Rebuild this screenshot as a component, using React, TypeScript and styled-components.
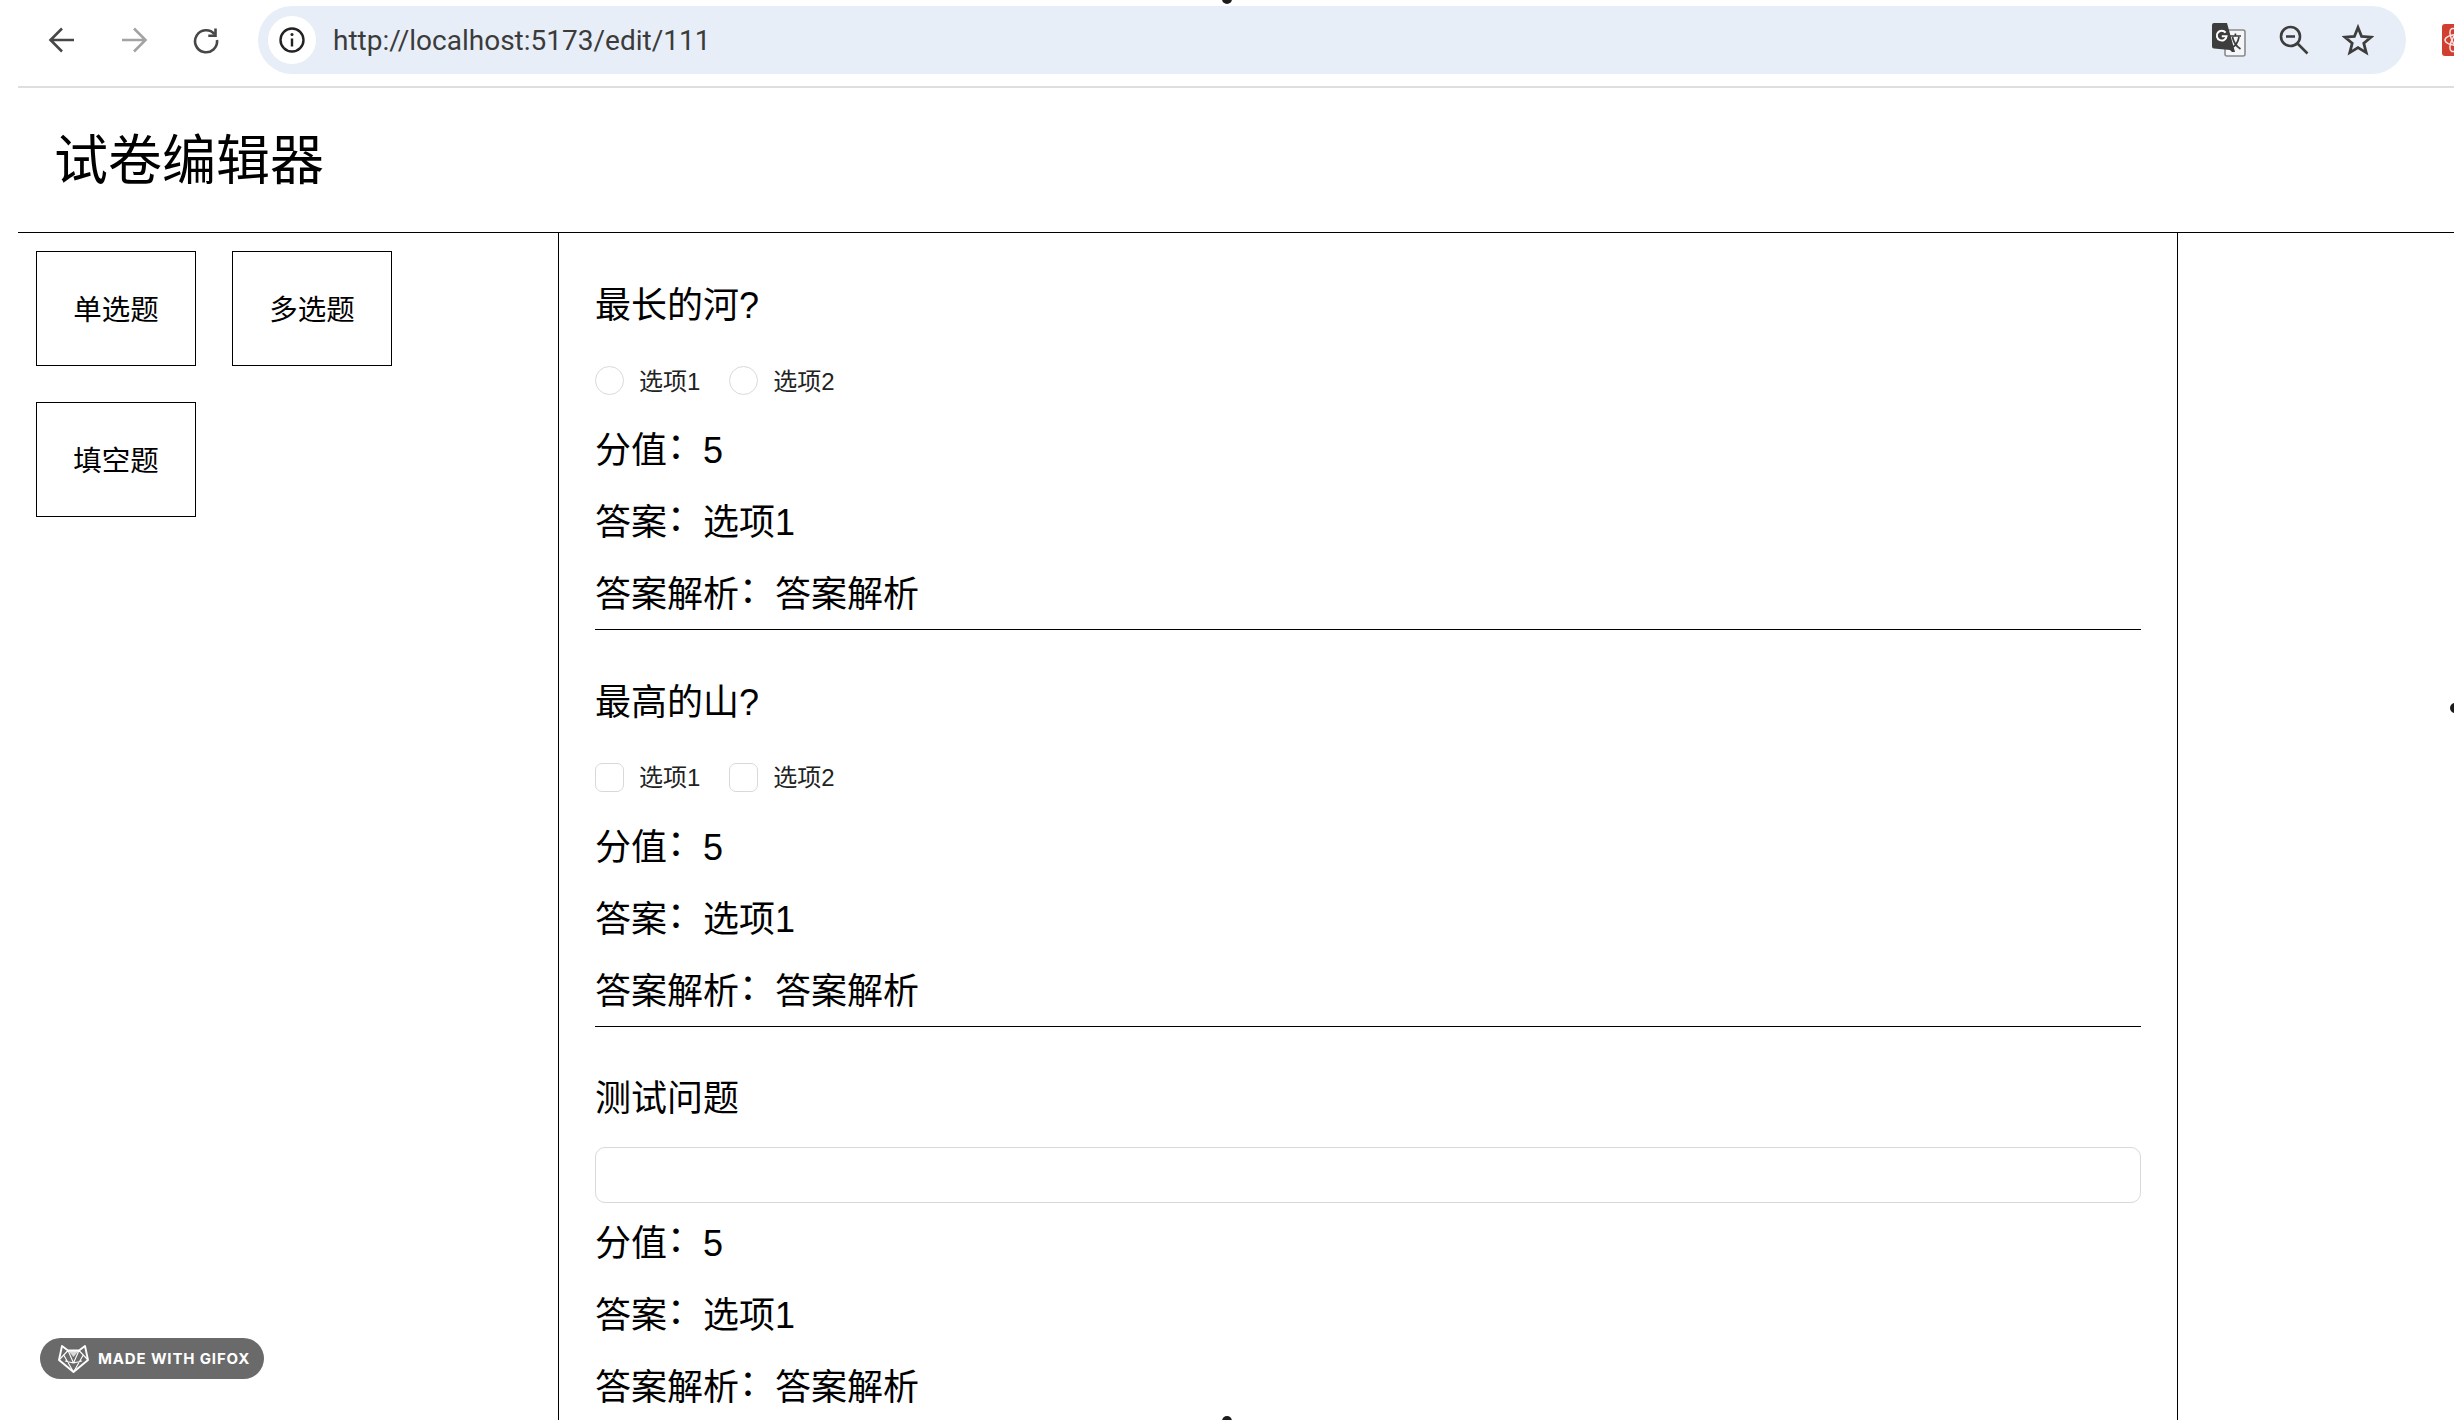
import React from "react";
import styled, { createGlobalStyle } from "styled-components";

const Global = createGlobalStyle`
  html, body { margin: 0; padding: 0; height: 100%; overflow: hidden; background: #fff; }
  body { font-family: "Liberation Sans", "Noto Sans CJK SC", sans-serif; color: #000; }
  * { box-sizing: border-box; }
`;

const Page = styled.div`
  position: relative;
  width: 2454px;
  height: 1420px;
  padding-left: 18px;
  overflow: hidden;
  background: #fff;
`;

const Toolbar = styled.div`
  display: flex;
  align-items: flex-start;
  height: 88px;
  padding: 6px 0 0 8px;
  border-bottom: 2px solid #dedede;
  overflow: hidden;
`;

const NavSlot = styled.div`
  flex: 0 0 72px;
  height: 68px;
  display: flex;
  align-items: center;
  justify-content: center;
`;

const UrlBar = styled.div`
  flex: 0 0 2148px;
  height: 68px;
  margin-left: 16px;
  padding: 0 32px 0 10px;
  display: flex;
  align-items: center;
  border-radius: 34px;
  background: #e8eef8;
`;

const InfoBadge = styled.div`
  flex: 0 0 48px;
  height: 48px;
  border-radius: 50%;
  background: #fff;
  display: flex;
  align-items: center;
  justify-content: center;
`;

const UrlText = styled.span`
  margin-left: 17px;
  font-family: "Roboto", "Liberation Sans", sans-serif;
  font-size: 28px;
  color: #3b3b3b;
  white-space: nowrap;
`;

const BarIcons = styled.div`
  margin-left: auto;
  display: flex;
  align-items: center;
  gap: 33px;
`;

const Extension = styled.div`
  flex: 0 0 32px;
  height: 32px;
  margin: 18px 0 0 36px;
  border-radius: 3px;
  background: #d13f30;
  display: flex;
  align-items: center;
  justify-content: center;
`;

const Header = styled.header`
  height: 145px;
  padding: 2px 0 0 36px;
  display: flex;
  align-items: center;
  border-bottom: 1px solid #000;
`;

const Title = styled.h1`
  margin: 0;
  font-size: 54px;
  font-weight: 400;
  line-height: 1;
`;

const Workspace = styled.div`
  display: flex;
  height: 1187px;
  overflow: hidden;
`;

const Palette = styled.aside`
  flex: 0 0 540px;
  padding: 18px;
  display: flex;
  flex-wrap: wrap;
  align-content: flex-start;
  gap: 36px;
`;

const PaletteItem = styled.div`
  width: 160px;
  height: 115px;
  padding-bottom: 3px;
  border: 1px solid #000;
  display: flex;
  align-items: center;
  justify-content: center;
  font-size: 28.5px;
`;

const Editor = styled.main`
  flex: 0 0 1620px;
  padding: 45px 36px 0;
  border-left: 1px solid #000;
  border-right: 1px solid #000;
`;

const Question = styled.section`
  margin-bottom: 44.6px;
  border-bottom: 1px solid #000;
  padding-bottom: 7px;
`;

const QuestionTitle = styled.div`
  padding-top: 1px;
  font-size: 36px;
  line-height: 54px;
`;

const AnswerArea = styled.div`
  height: 91px;
  padding: 20px 0 16px;
  display: flex;
  align-items: center;
  font-size: 24px;
`;

const Option = styled.label`
  display: flex;
  align-items: center;
  gap: 15px;
  margin-right: 29px;
  color: #222;
`;

const OptionText = styled.span`
  margin-bottom: 3px;
`;

const Control = styled.span<{ $round?: boolean }>`
  width: 29px;
  height: 29px;
  border: 1px solid #d9d9d9;
  border-radius: ${(p) => (p.$round ? "50%" : "7px")};
  background: #fff;
`;

const BlankInput = styled.div`
  flex: 0 0 auto;
  width: 100%;
  height: 56px;
  margin-top: 2px;
  border: 1px solid #d9d9d9;
  border-radius: 10px;
  background: #fff;
`;

const Row = styled.div`
  font-size: 36px;
  line-height: 54px;
  margin-bottom: 18px;
  &:last-child { margin-bottom: 0; }
`;

const Colon = styled.span`
  vertical-align: 4px;
  line-height: 0;
`;

const GifoxBadge = styled.div`
  position: absolute;
  left: 40px;
  top: 1338px;
  width: 224px;
  height: 41px;
  padding-left: 18px;
  border-radius: 21px;
  background: #6a6a6a;
  display: flex;
  align-items: center;
  gap: 9px;
  color: #fff;
  font-family: "Inter", "Liberation Sans", sans-serif;
  font-size: 15px;
  font-weight: 700;
  letter-spacing: 0.85px;
  white-space: nowrap;
`;

const Handle = styled.span<{ $x: number; $y: number }>`
  position: absolute;
  left: ${(p) => p.$x}px;
  top: ${(p) => p.$y}px;
  width: 10px;
  height: 10px;
  border-radius: 50%;
  background: #1c1c1c;
`;

const iconColor = "#474747";

const BackIcon = () => (
  <svg width="28" height="28" viewBox="0 0 28 28" fill="none" stroke={iconColor} strokeWidth="2.6">
    <path d="M26 14H3M14 2.5 2.5 14 14 25.5" />
  </svg>
);
const ForwardIcon = () => (
  <svg width="28" height="28" viewBox="0 0 28 28" fill="none" stroke="#a3a3a3" strokeWidth="2.6">
    <path d="M2 14h23M14 2.5 25.5 14 14 25.5" />
  </svg>
);
const ReloadIcon = () => (
  <svg width="28" height="28" viewBox="0 0 28 28" fill="none" stroke={iconColor} strokeWidth="2.6">
    <path d="M22.5 8.2A11 11 0 1 0 25 14" />
    <path d="M23.5 2.5v7.2h-7.2" />
  </svg>
);
const InfoIcon = () => (
  <svg width="28" height="28" viewBox="0 0 28 28" fill="none" stroke="#222" strokeWidth="2.4">
    <circle cx="14" cy="14" r="11.5" />
    <path d="M14 12.5v8" />
    <circle cx="14" cy="8.6" r="1.5" fill="#222" stroke="none" />
  </svg>
);
const TranslateIcon = () => (
  <svg width="34" height="34" viewBox="0 0 34 34" fill="none">
    <rect x="13" y="7" width="20" height="26" rx="2" fill="#f4f6fa" stroke="#8b8b8b" strokeWidth="1.6" />
    <path d="M2 0h13l8 29h-3l-2-2-16-1.5a2 2 0 0 1-2-2V2a2 2 0 0 1 2-2z" fill="#3d3d3d" />
    <path d="M13.6 9.6a4.9 4.9 0 1 0 1 3.6H9.8" stroke="#fff" strokeWidth="2" />
    <path d="M18 13h11M23.4 10.5v2.5M20.5 14c1 5 4 9.5 8 12M27 14c-1 5-3 8-6 10" stroke="#3d3d3d" strokeWidth="1.7" />
  </svg>
);
const ZoomOutIcon = () => (
  <svg width="30" height="30" viewBox="0 0 30 30" fill="none" stroke="#3d3d3d" strokeWidth="2.6">
    <circle cx="11.5" cy="11.5" r="9.5" />
    <path d="M7 11.5h9M18.5 18.5 28.5 28.5" />
  </svg>
);
const StarIcon = () => (
  <svg width="32" height="32" viewBox="0 0 32 32" fill="none" stroke="#3d3d3d" strokeWidth="2.8" strokeLinejoin="miter">
    <path d="M16 3.5 19.6 12.4 29.2 13.1 21.8 19.3 24.2 28.6 16 23.6 7.8 28.6 10.2 19.3 2.8 13.1 12.4 12.4Z" />
  </svg>
);
const AtomIcon = () => (
  <svg width="32" height="32" viewBox="0 0 32 32" fill="none" stroke="#fbe3df" strokeWidth="1.5">
    <ellipse cx="16" cy="16" rx="13" ry="5.5" />
    <ellipse cx="16" cy="16" rx="13" ry="5.5" transform="rotate(60 16 16)" />
    <ellipse cx="16" cy="16" rx="13" ry="5.5" transform="rotate(120 16 16)" />
  </svg>
);
const FoxIcon = () => (
  <svg width="31" height="28" viewBox="0 0 31 28" fill="none" stroke="#fff" strokeWidth="1.9" strokeLinejoin="round">
    <path d="M4 1 10 5.5H21L27 1 30 15 15.5 27 1 15Z" />
    <path d="M1 15 10 5.5 15.5 18 21 5.5 30 15M6 10.5 15.5 27 25 10.5M7 16l8.5 2 8.5-2" strokeWidth="1.1" />
    <path d="M10 5.5H21L15.5 12Z" fill="#fff" opacity="0.75" stroke="none" />
  </svg>
);

type Kind = "radio" | "checkbox" | "blank";

const questions: { title: string; kind: Kind }[] = [
  { title: "最长的河?", kind: "radio" },
  { title: "最高的山?", kind: "checkbox" },
  { title: "测试问题", kind: "blank" },
];

const Field = ({ label, value }: { label: string; value: string }) => (
  <Row>
    {label}
    <Colon>：</Colon>
    {value}
  </Row>
);

export default function App() {
  return (
    <Page>
      <Global />
      <Toolbar>
        <NavSlot><BackIcon /></NavSlot>
        <NavSlot><ForwardIcon /></NavSlot>
        <NavSlot><ReloadIcon /></NavSlot>
        <UrlBar>
          <InfoBadge><InfoIcon /></InfoBadge>
          <UrlText>http://localhost:5173/edit/111</UrlText>
          <BarIcons>
            <TranslateIcon />
            <ZoomOutIcon />
            <StarIcon />
          </BarIcons>
        </UrlBar>
        <Extension><AtomIcon /></Extension>
      </Toolbar>
      <Header>
        <Title>试卷编辑器</Title>
      </Header>
      <Workspace>
        <Palette>
          <PaletteItem>单选题</PaletteItem>
          <PaletteItem>多选题</PaletteItem>
          <PaletteItem>填空题</PaletteItem>
        </Palette>
        <Editor>
          {questions.map((q) => (
            <Question key={q.title}>
              <QuestionTitle>{q.title}</QuestionTitle>
              <AnswerArea>
                {q.kind === "blank" ? (
                  <BlankInput />
                ) : (
                  ["选项1", "选项2"].map((o) => (
                    <Option key={o}>
                      <Control $round={q.kind === "radio"} />
                      <OptionText>{o}</OptionText>
                    </Option>
                  ))
                )}
              </AnswerArea>
              <Field label="分值" value="5" />
              <Field label="答案" value="选项1" />
              <Field label="答案解析" value="答案解析" />
            </Question>
          ))}
        </Editor>
      </Workspace>
      <GifoxBadge>
        <FoxIcon />
        MADE WITH GIFOX
      </GifoxBadge>
      <Handle $x={1222} $y={-6} />
      <Handle $x={1222} $y={1416} />
      <Handle $x={2450} $y={703} />
    </Page>
  );
}
